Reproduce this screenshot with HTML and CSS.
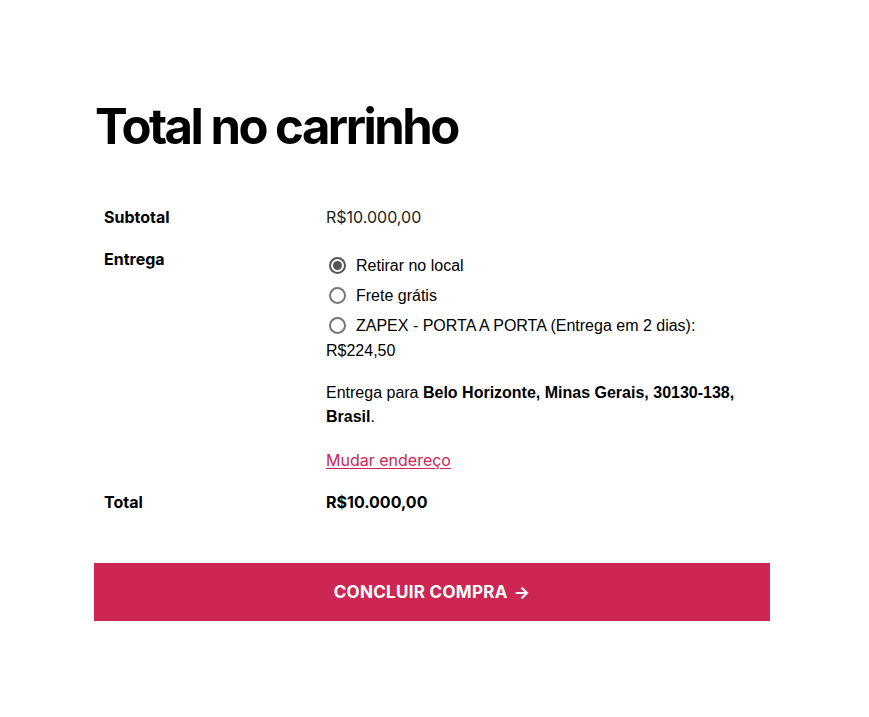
FILE: index.html
```html
<!DOCTYPE html>
<html lang="pt-BR">
<head>
<meta charset="utf-8">
<title>Total no carrinho</title>
<link rel="stylesheet" href="styles.css">
</head>
<body>
<div class="cart-totals">
  <h2 class="title">Total no carrinho</h2>
  <div class="rows">
    <div class="row">
      <div class="label">Subtotal</div>
      <div class="value">R$10.000,00</div>
    </div>
    <div class="row shipping">
      <div class="label">Entrega</div>
      <div class="value">
        <ul class="methods">
          <li><span class="radio checked"></span>Retirar no local</li>
          <li><span class="radio"></span>Frete grátis</li>
          <li><span class="radio"></span>ZAPEX - PORTA A PORTA (Entrega em 2 dias): <span class="price">R$224,50</span></li>
        </ul>
        <p class="dest">Entrega para <strong>Belo Horizonte, Minas Gerais, 30130-138, Brasil</strong>.</p>
        <a class="change" href="#">Mudar endereço</a>
      </div>
    </div>
    <div class="row total">
      <div class="label">Total</div>
      <div class="value"><strong>R$10.000,00</strong></div>
    </div>
  </div>
  <a class="checkout" href="#">CONCLUIR COMPRA <span class="arrow">→</span></a>
</div>
</body>
</html>
```
FILE: styles.css
```css
html, body {
  margin: 0;
  padding: 0;
  background: #fff;
}
body {
  font-family: Inter, "Liberation Sans", sans-serif;
  color: #000;
}
.cart-totals {
  width: 676px;
  margin-left: 94px;
  padding-top: 98px;
}
.title {
  font-family: Inter, sans-serif;
  font-weight: 700;
  font-size: 49px;
  letter-spacing: -2.5px;
  line-height: 1.2;
  margin: 0 0 39px 1px;
}
.rows {
  display: flex;
  flex-direction: column;
}
.row {
  display: grid;
  grid-template-columns: 222px 1fr;
  padding: 9px 10px;
}
.label {
  font-weight: 700;
  font-size: 16px;
  line-height: 24px;
}
.value {
  font-size: 16px;
  line-height: 24px;
  color: #222;
}
.methods {
  list-style: none;
  margin: 0;
  padding: 0;
  font-family: "Liberation Sans", Arial, sans-serif;
  font-size: 16px;
  color: #000;
}
.methods li {
  line-height: 25px;
  margin-top: 5px;
}
.methods li:first-child {
  margin-top: 6px;
}
.radio {
  display: inline-block;
  width: 13px;
  height: 13px;
  border: 2px solid #767676;
  border-radius: 50%;
  vertical-align: -3px;
  margin: 0 10px 0 3px;
  box-sizing: content-box;
  position: relative;
}
.radio.checked {
  border-color: #555;
}
.radio.checked::after {
  content: "";
  position: absolute;
  left: 2px;
  top: 2px;
  width: 9px;
  height: 9px;
  border-radius: 50%;
  background: #555;
}
.price {
  white-space: nowrap;
}
.dest {
  font-family: "Liberation Sans", Arial, sans-serif;
  font-size: 16px;
  line-height: 24px;
  margin: 18px 0 0;
  color: #000;
}
.dest strong {
  font-weight: 700;
}
.change {
  display: inline-block;
  margin-top: 19px;
  color: #cd2653;
  font-size: 16px;
  line-height: 24px;
  text-decoration: underline;
  text-underline-offset: 2px;
}
.total .value strong {
  font-size: 16px;
  font-weight: 700;
  color: #000;
}
.checkout {
  display: flex;
  align-items: center;
  justify-content: center;
  height: 58px;
  margin-top: 40px;
  background: #cd2653;
  color: #fff;
  font-family: Inter, sans-serif;
  font-weight: 700;
  font-size: 17px;
  letter-spacing: 0.3px;
  text-decoration: none;
}
.arrow {
  margin-left: 6px;
}
```
